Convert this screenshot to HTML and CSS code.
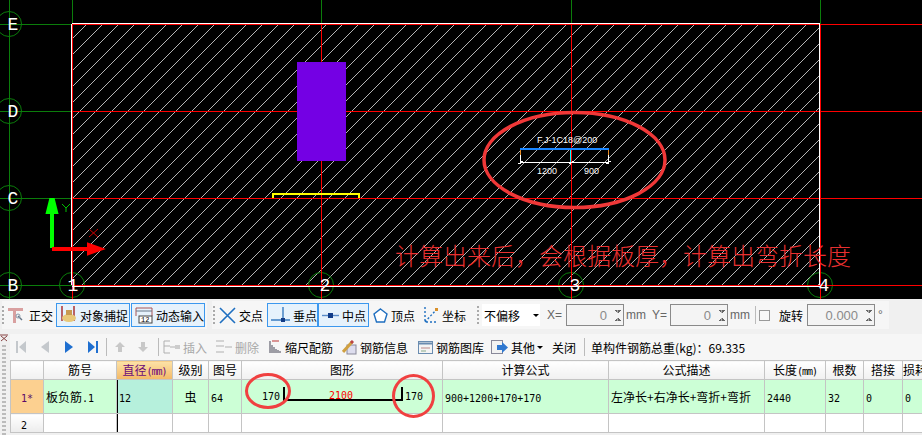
FILE: index.html
```html
<!DOCTYPE html>
<html lang="zh">
<head>
<meta charset="utf-8">
<title>钢筋编辑</title>
<link rel="stylesheet" href="styles.css">
</head>
<body>
<main class="app">
<svg class="cad" width="922" height="299" viewBox="0 0 922 299" xmlns="http://www.w3.org/2000/svg">
  <defs>
    <pattern id="hatch" patternUnits="userSpaceOnUse" width="16" height="16" x="0" y="0">
      <path d="M-1 16 L16 -1 M15 16 L16 15 M-1 0 L0 -1" class="hatch-line"/>
    </pattern>
  </defs>
  <rect x="72" y="24" width="748" height="261" fill="url(#hatch)"/>
  <g class="green">
    <path d="M0 24.5H72M0 111.5H72M0 198.5H72M0 285.5H72M9.5 0V299M72.5 0V24M321.5 0V24M571.5 0V24M820.5 0V24"/>
    <circle cx="9" cy="24" r="12.5"/><circle cx="9" cy="111" r="12.5"/><circle cx="9" cy="198" r="12.5"/><circle cx="9" cy="285" r="12.5"/>
    <circle cx="72" cy="285" r="12.5"/><circle cx="321" cy="285" r="12.5"/><circle cx="571" cy="285" r="12.5"/><circle cx="820" cy="285" r="12.5"/>
  </g>
  <g class="red-line">
    <path d="M72 24.5H922M72 111.5H922M72 198.5H922M72 285.5H922M72.5 24V299M321.5 24V299M571.5 24V299M820.5 24V299"/>
  </g>
  <path class="white-line" d="M72 23.5H820M71.5 24V285M819.5 24V285M72 286.5H820"/>
  <g class="axis-letters">
    <text x="13" y="30">E</text><text x="13" y="117">D</text><text x="13" y="204">C</text><text x="13" y="291">B</text>
    <text x="73" y="291">1</text><text x="325" y="291">2</text><text x="575" y="291">3</text><text x="824" y="291">4</text>
  </g>
  <rect class="purple" x="297" y="62" width="49" height="99"/>
  <path class="yellow" d="M272.5 198V193.5H359V198"/>
  <path class="orange-dim" d="M520.5 150V155M608.5 150V155"/>
  <path class="white-dim" d="M520.5 155V164M608.5 155V164M520 162.5H609M518 164L523 161M606 164L611 161M569 164L574 161"/>
  <path class="blue-dim" d="M520 149H609"/>
  <path class="cyan-dim" d="M570.5 150V162"/>
  <text class="dim-label" x="537" y="143">F.J-1C18@200</text>
  <text class="dim-text" x="537" y="174">1200</text>
  <text class="dim-text" x="584" y="174">900</text>
  <ellipse class="ring" cx="574.5" cy="160" rx="90.5" ry="47.5"/>
  <path class="axis-y" d="M52 248V212M48 212H56L53 200H51Z"/>
  <path class="axis-x" d="M52 249H90M89 245V253L100 249Z"/>
  <path class="label-y" d="M62 204L66 208L70 204M66 208V212"/>
  <path class="label-x" d="M89 229L98 237M98 229L89 237"/>
  <text class="note" x="395" y="265">计算出来后，会根据板厚，计算出弯折长度</text>
</svg>

<section class="bar-one">
  <div class="panel panel-left">
    <span class="grip"></span>
    <span class="tool ml4">
      <svg class="ico" width="18" height="18" viewBox="0 0 18 18"><path d="M0 2H15V5H8V17H5V5H0Z" fill="#d9a0a0"/><path d="M10 10L14 14" stroke="#678" stroke-width="1.5"/><circle cx="10" cy="10" r="2" fill="none" stroke="#89a"/></svg>
      正交
    </span>
    <span class="btn w74 ml3">
      <svg class="ico" width="17" height="18" viewBox="0 0 17 18"><path d="M2 0V15M14 0V15" stroke="#a33" stroke-width="1.5"/><ellipse cx="9" cy="12" rx="7" ry="4" fill="#e8c878"/><rect x="6" y="4" width="6" height="5" fill="#c89a50"/></svg>
      对象捕捉
    </span>
    <span class="btn w74 ml1">
      <svg class="ico" width="18" height="17" viewBox="0 0 18 17"><path d="M1 1H17M1 1V9M17 1V9" stroke="#a55" fill="none"/><path d="M1 4H17" stroke="#678"/><rect x="4" y="9" width="13" height="7" fill="#fff" stroke="#444"/><text class="ico-num" x="6" y="15">12</text></svg>
      动态输入
    </span>
  </div>
  <div class="panel panel-main">
    <span class="grip"></span>
    <span class="tool ml4">
      <svg class="ico" width="17" height="17" viewBox="0 0 17 17"><path d="M1 1L16 16M16 1L1 16" stroke="#1f6fc0" stroke-width="1.6"/></svg>
      交点
    </span>
    <span class="btn w51 ml4">
      <svg class="ico" width="19" height="17" viewBox="0 0 19 17"><path d="M12 0V12M0 13H19" stroke="#3a7cc0" stroke-width="1.4"/><rect x="10" y="11" width="4" height="4" fill="#123c88"/></svg>
      垂点
    </span>
    <span class="btn w51">
      <svg class="ico" width="17" height="7" viewBox="0 0 17 7"><path d="M0 3.5H17" stroke="#5a8cc8" stroke-width="1.4"/><rect x="6" y="1" width="5" height="5" fill="#123c88"/></svg>
      中点
    </span>
    <span class="tool ml4">
      <svg class="ico" width="15" height="15" viewBox="0 0 15 15"><path d="M7.5 1L14 6L11.5 14H3.5L1 6Z" fill="#fff" stroke="#1f6fc0" stroke-width="1.4"/></svg>
      顶点
    </span>
    <span class="tool ml7">
      <svg class="ico" width="17" height="18" viewBox="0 0 17 18"><path d="M3 1V16H16M3 16L14 4" stroke="#1f6fc0" fill="none" stroke-width="1.4" stroke-dasharray="2 2"/><rect x="13" y="2" width="3" height="3" fill="#d9902a"/></svg>
      坐标
    </span>
    <span class="grip ml11"></span>
    <span class="combo ml3">不偏移<i class="caret"></i></span>
    <span class="label ml7">X=</span>
    <span class="spin w58 ml4">0<i class="spin-arrows"></i></span>
    <span class="label ml2">mm</span>
    <span class="label ml6">Y=</span>
    <span class="spin w58 ml3">0<i class="spin-arrows"></i></span>
    <span class="label ml2">mm</span>
    <span class="vsep ml5"></span>
    <span class="check ml3"></span>
    <span class="plain ml9">旋转</span>
    <span class="spin w68 ml4">0.000<i class="spin-arrows"></i></span>
    <span class="label ml3">°</span>
  </div>
</section>

<div class="lower">
  <aside class="side">
    <svg class="side-x" width="8" height="8" viewBox="0 0 8 8"><path d="M0 1H8M1 2L7 7M7 2L1 7" stroke="#844" fill="none"/></svg>
    <span class="side-grip"></span>
  </aside>
  <div class="lower-main">
    <section class="bar-two">
      <span class="nav ml5"><svg width="10" height="12" viewBox="0 0 10 12"><path d="M0 0H2V12H0ZM10 0V12L3 6Z" fill="#c4c8cc"/></svg></span>
      <span class="nav ml15"><svg width="8" height="12" viewBox="0 0 8 12"><path d="M8 0V12L0 6Z" fill="#c4c8cc"/></svg></span>
      <span class="nav ml16"><svg width="8" height="12" viewBox="0 0 8 12"><path d="M0 0V12L8 6Z" fill="#1f6fd0"/></svg></span>
      <span class="nav ml15"><svg width="10" height="12" viewBox="0 0 10 12"><path d="M0 0V12L7 6ZM8 0H10V12H8Z" fill="#1f6fd0"/></svg></span>
      <span class="vsep ml8"></span>
      <span class="nav ml8"><svg width="10" height="10" viewBox="0 0 10 10"><path d="M5 0L10 5H7V10H3V5H0Z" fill="#c8c8c8"/></svg></span>
      <span class="nav ml13"><svg width="10" height="10" viewBox="0 0 10 10"><path d="M5 10L10 5H7V0H3V5H0Z" fill="#c8c8c8"/></svg></span>
      <span class="vsep ml10"></span>
      <span class="tool off ml4">
        <svg class="ico" width="17" height="14" viewBox="0 0 17 14"><path d="M1 1H7M1 6H7M1 13H7M1 1V13" stroke="#b0b0b0" fill="none"/><path d="M7 7H12" stroke="#b0b0b0"/><rect x="12" y="5" width="5" height="4" fill="#ccc"/></svg>
        插入
      </span>
      <span class="tool off ml8">
        <svg class="ico" width="17" height="14" viewBox="0 0 17 14"><path d="M1 1H9M1 6H9M1 12H9" stroke="#b0b0b0"/><path d="M10 7H17" stroke="#b0b0b0"/></svg>
        删除
      </span>
      <span class="tool ml10">
        <svg class="ico" width="13" height="14" viewBox="0 0 13 14"><path d="M1 1V13M3 5V13M5 7V13M7 9V13M9 10V13M11 11V13" stroke="#445"/><path d="M3 1H10" stroke="#b33"/></svg>
        缩尺配筋
      </span>
      <span class="tool ml9">
        <svg class="ico" width="15" height="15" viewBox="0 0 15 15"><rect x="5" y="5" width="9" height="9" fill="#dde" stroke="#889"/><path d="M1 12L10 2" stroke="#d0a040" stroke-width="3"/><path d="M9 3L11 1" stroke="#b44" stroke-width="3"/></svg>
        钢筋信息
      </span>
      <span class="tool ml10">
        <svg class="ico" width="15" height="13" viewBox="0 0 15 13"><rect x=".5" y=".5" width="14" height="12" fill="#f4f4f4" stroke="#6a8cb0"/><path d="M1 2.5H14" stroke="#6a8cb0" stroke-width="2"/><path d="M3 7H12" stroke="#b88"/><path d="M3 10H8" stroke="#8a8"/></svg>
        钢筋图库
      </span>
      <span class="tool ml7">
        <svg class="ico" width="17" height="15" viewBox="0 0 17 15"><rect x=".5" y=".5" width="11" height="13" fill="#f2f2f2" stroke="#889"/><path d="M6 5H11V2L17 7.5L11 13V10H6Z" fill="#2f78d0"/></svg>
        其他
      </span>
      <i class="caret small"></i>
      <span class="plain ml9">关闭</span>
      <span class="vsep ml8"></span>
      <span class="plain weight ml6">单构件钢筋总重(kg)：69.335</span>
    </section>

    <div class="sheet">
      <table class="grid">
        <colgroup>
          <col class="c-row"><col class="c-no"><col class="c-dia"><col class="c-grade"><col class="c-fig"><col class="c-shape"><col class="c-calc"><col class="c-desc"><col class="c-len"><col class="c-num"><col class="c-lap"><col class="c-loss">
        </colgroup>
        <thead>
          <tr>
            <th></th><th>筋号</th><th class="th-active">直径<small>(mm)</small></th><th>级别</th><th>图号</th><th>图形</th><th>计算公式</th><th>公式描述</th><th>长度<small>(mm)</small></th><th>根数</th><th>搭接</th><th class="clip">损耗</th>
          </tr>
        </thead>
        <tbody>
          <tr class="row-on">
            <td class="rowhead"><span class="mono">1*</span></td>
            <td>板负筋<span class="mono">.1</span></td>
            <td class="td-sel line"><span class="mono">12</span></td>
            <td class="center grade">虫</td>
            <td><span class="mono">64</span></td>
            <td class="shape">
              <div class="bend">
                <span class="mono dim">170</span>
                <div class="bar-shape"><span class="mono bar-len">2100</span></div>
                <span class="mono dim">170</span>
              </div>
            </td>
            <td><span class="mono">900+1200+170+170</span></td>
            <td>左净长+右净长+弯折+弯折</td>
            <td><span class="mono">2440</span></td>
            <td><span class="mono">32</span></td>
            <td><span class="mono">0</span></td>
            <td><span class="mono">0</span></td>
          </tr>
          <tr class="row-off">
            <td class="rowhead2"><span class="mono">2</span></td>
            <td></td><td class="line"></td><td></td><td></td><td></td><td></td><td></td><td></td><td></td><td></td><td></td>
          </tr>
        </tbody>
      </table>
      <span class="hand hand-left"></span>
      <span class="hand hand-right"></span>
    </div>
  </div>
</div>
</main>
</body>
</html>
```
FILE: styles.css
```css
* { box-sizing: border-box; }
html, body { margin: 0; padding: 0; }
body { width: 922px; height: 435px; overflow: hidden; background: #f0f0f0; font: 12px "Noto Sans CJK SC", "Liberation Sans", sans-serif; color: #000; }
.app { display: flex; flex-direction: column; width: 922px; height: 435px; }

/* CAD canvas */
.cad { display: block; flex: none; background: #000; }
.hatch-line { stroke: #b4b4b4; stroke-width: 1; fill: none; shape-rendering: crispEdges; }
.green { stroke: #0b7d0b; fill: none; stroke-width: 1; }
.red-line { stroke: #ff0000; fill: none; stroke-width: 1; shape-rendering: crispEdges; }
.white-line { stroke: #fff; fill: none; stroke-width: 1; shape-rendering: crispEdges; }
.axis-letters text { font: 18px "Liberation Mono", monospace; fill: #fff; text-anchor: middle; }
.purple { fill: #7400e4; }
.yellow { stroke: #ffff00; stroke-width: 2; fill: none; shape-rendering: crispEdges; }
.blue-dim { stroke: #1a86ff; stroke-width: 2; fill: none; shape-rendering: crispEdges; }
.cyan-dim { stroke: #00ffff; stroke-width: 1; fill: none; shape-rendering: crispEdges; }
.orange-dim { stroke: #e88a20; stroke-width: 1; fill: none; shape-rendering: crispEdges; }
.white-dim { stroke: #fff; stroke-width: 1; fill: none; shape-rendering: crispEdges; }
.dim-label { font: 9px "Liberation Sans", sans-serif; fill: #fff; }
.dim-text { font: 9px "Liberation Sans", sans-serif; fill: #fff; }
.ring { fill: none; stroke: #f03838; stroke-width: 3.5; }
.axis-y { fill: #00ff00; stroke: #00ff00; stroke-width: 4; stroke-linejoin: miter; }
.axis-x { fill: #ff0000; stroke: #ff0000; stroke-width: 4; }
.label-y { stroke: #00c000; fill: none; }
.label-x { stroke: #d00000; fill: none; }
.note { font: 300 24px "Noto Sans CJK SC", sans-serif; fill: #e83030; }

/* first toolbar */
.bar-one { flex: none; height: 35px; display: flex; align-items: flex-start; padding: 2px 0 0 2px; background: #f0f0f0; border-bottom: 0; }
.panel { display: flex; align-items: center; height: 28px; background: #f6f6f6; }
.panel-left { width: 205px; }
.panel-main { width: 677px; margin-left: 5px; padding-left: 1px; }
.grip { flex: none; width: 2px; height: 18px; background: repeating-linear-gradient(#aaa 0 2px, transparent 2px 4px); }
.tool { display: inline-flex; align-items: center; gap: 3px; flex: none; white-space: nowrap; }
.ico { flex: none; display: block; }
.ico-num { font: 7px "Liberation Mono", monospace; fill: #000; }
.btn { display: inline-flex; align-items: center; gap: 3px; flex: none; height: 24px; padding-left: 3px; border: 1px solid #3c98ee; background: #e6f2fc; white-space: nowrap; }
.w74 { width: 74px; }
.w51 { width: 51px; }
.combo { flex: none; display: inline-flex; align-items: center; width: 58px; height: 22px; padding-left: 2px; background: #fff; font-size: 12px; position: relative; gap: 13px; }
.caret { display: inline-block; width: 0; height: 0; border: 3px solid transparent; border-top: 3px solid #000; border-bottom: 0; flex: none; }
.caret.small { margin-left: 2px; }
.label { flex: none; color: #666; font: 12px "Liberation Sans", sans-serif; }
.plain { flex: none; white-space: nowrap; }
.spin { flex: none; display: flex; align-items: center; justify-content: flex-end; gap: 7px; height: 22px; padding-right: 2px; border: 1px solid #8a8a8a; background: #f4f4f4; color: #8a8a8a; font: 13px "Liberation Sans", sans-serif; }
.w58 { width: 58px; }
.w68 { width: 68px; }
.spin-arrows { display: block; width: 7px; height: 14px; background:
  linear-gradient(45deg, transparent 50%, #666 50%) 0 2px / 3.5px 3px no-repeat,
  linear-gradient(-45deg, transparent 50%, #666 50%) 3.5px 2px / 3.5px 3px no-repeat,
  linear-gradient(135deg, transparent 50%, #666 50%) 0 10px / 3.5px 3px no-repeat,
  linear-gradient(-135deg, transparent 50%, #666 50%) 3.5px 10px / 3.5px 3px no-repeat; }
.vsep { flex: none; display: block; width: 1px; height: 18px; background: #bbb; }
.check { flex: none; display: block; width: 11px; height: 11px; border: 1px solid #999; background: #f8f8f8; }

/* left strip + lower area */
.lower { display: flex; flex: 1; min-height: 0; }
.side { flex: none; width: 10px; display: flex; flex-direction: column; align-items: flex-start; background: #f0f0f0; }
.side-x { display: block; margin-top: 0; }
.side-grip { display: block; width: 4px; height: 90px; margin: 3px 0 0 2px; background: repeating-linear-gradient(#bbb 0 2px, transparent 2px 4px); }
.lower-main { flex: 1; min-width: 0; display: flex; flex-direction: column; }
.bar-two { flex: none; height: 26px; display: flex; align-items: center; padding-left: 1px; background: #f6f6f6; margin-bottom: 0; }
.nav { flex: none; display: block; line-height: 0; }
.off { color: #a8a8a8; }

/* sheet */
.sheet { position: relative; flex: none; width: 912px; height: 75px; background: #f0f0f0; overflow: hidden; }
.grid { border-collapse: collapse; table-layout: fixed; width: 912px; }
.c-row { width: 33px; } .c-no { width: 73px; } .c-dia { width: 56px; } .c-grade { width: 36px; } .c-fig { width: 33px; }
.c-shape { width: 201px; } .c-calc { width: 166px; } .c-desc { width: 156px; }
.c-len { width: 61px; } .c-num { width: 38px; } .c-lap { width: 39px; } .c-loss { width: 20px; }
.grid th, .grid td { border: 1px solid #c4c4c4; padding: 0; overflow: hidden; white-space: nowrap; font-weight: 400; }
.grid th { height: 19px; font-size: 12px; line-height: 16px; text-align: center; background: linear-gradient(#fff, #f0f0f0); }
.grid th small { font: 10px "DejaVu Sans Mono", monospace; letter-spacing: -1px; }
.grid th.clip { text-align: left; }
.grid th.th-active { color: #6a0a7a; background: linear-gradient(#fde3a8, #f3b866); }
.grid td { padding-left: 2px; font-size: 12px; }
.row-on td { height: 34px; background: #ccffd6; }
.row-off td { height: 19px; background: #fff; }
.grid td.td-sel { background: #b6f0dc; }
.grid td.line { box-shadow: inset 1px 0 0 #000; }
.grid td.rowhead { background: #fcd090; text-align: center; padding: 0; color: #5a0a6a; }
.grid td.rowhead2 { background: linear-gradient(#fff, #ececec); padding-left: 10px; }
.grid td.center { text-align: center; padding: 0; }
.mono { font: 10px "DejaVu Sans Mono", monospace; }
.grid td.shape { padding: 0; }
.bend { display: flex; align-items: center; padding-left: 20px; }
.dim { flex: none; width: 21px; }
.bar-shape { flex: none; width: 120px; height: 14px; margin-top: -5px; border: solid #000; border-width: 0 2px 2px 2px; text-align: center; line-height: 13px; color: #f00; }
.bar-len { color: #f00; position: relative; left: -2px; }
.bar-shape + .dim { margin-left: 2px; }
.hand { position: absolute; display: block; border: 3px solid #f04040; border-radius: 50%; }
.hand-left { left: 235px; top: 13px; width: 46px; height: 36px; }
.hand-right { left: 382px; top: 14px; width: 43px; height: 44px; }

/* spacing */
.ml1 { margin-left: 1px; } .ml2 { margin-left: 2px; } .ml3 { margin-left: 3px; } .ml4 { margin-left: 4px; }
.ml5 { margin-left: 5px; } .ml6 { margin-left: 6px; } .ml7 { margin-left: 7px; } .ml8 { margin-left: 8px; }
.ml9 { margin-left: 9px; } .ml10 { margin-left: 10px; } .ml11 { margin-left: 11px; } .ml13 { margin-left: 13px; }
.ml15 { margin-left: 15px; } .ml16 { margin-left: 16px; }
```
